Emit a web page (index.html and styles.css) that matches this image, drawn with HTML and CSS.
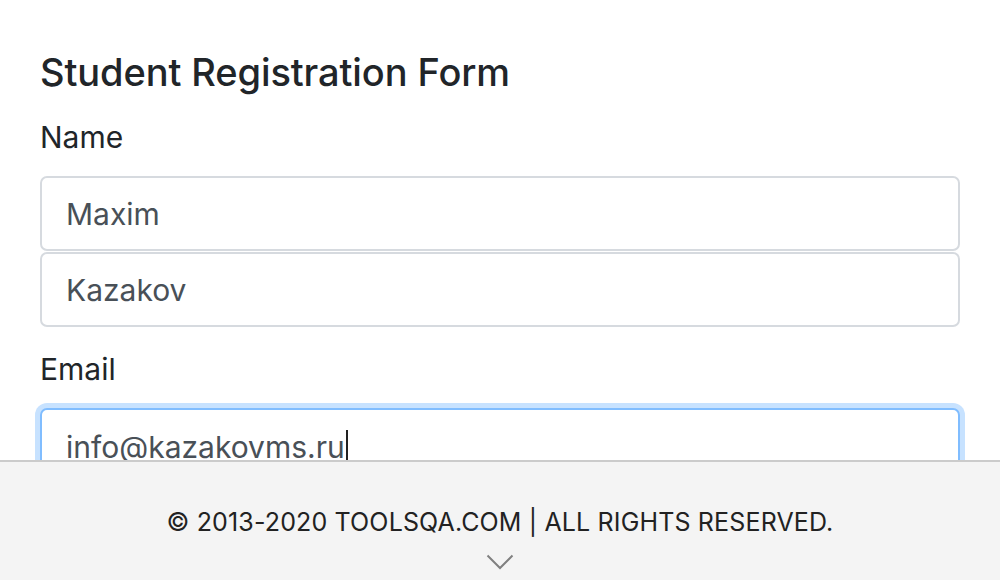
FILE: index.html
```html
<!DOCTYPE html>
<html lang="en">
<head>
<meta charset="utf-8">
<title>Student Registration Form</title>
<link rel="stylesheet" href="styles.css">
</head>
<body>
<main class="page">
  <h1 class="title">Student Registration Form</h1>
  <form class="form">
    <div class="group">
      <label class="label">Name</label>
      <div class="stack">
        <input class="field" type="text" value="Maxim">
        <input class="field" type="text" value="Kazakov">
      </div>
    </div>
    <div class="group">
      <label class="label">Email</label>
      <div class="field field-focus"><span>info@kazakovms.ru</span><span class="caret"></span></div>
    </div>
  </form>
</main>
<footer class="footer">
  <p class="copy">© 2013-2020 TOOLSQA.COM | ALL RIGHTS RESERVED.</p>
  <svg class="chev" width="28" height="16" viewBox="0 0 28 16"><path d="M1.5 1.5 L14 14 L26.5 1.5" fill="none" stroke="#808080" stroke-width="2"/></svg>
</footer>
</body>
</html>
```
FILE: styles.css
```css
html, body { margin: 0; padding: 0; background: #fff; }
body { font-family: Inter, "Noto Sans", sans-serif; color: #212529; overflow: hidden; height: 580px; }
.page { padding: 48px 40px 0 40px; width: 920px; }
.title { margin: 0; font-size: 38px; font-weight: 500; line-height: 48px; letter-spacing: -0.1px; }
.form { display: flex; flex-direction: column; gap: 24px; margin-top: 23px; }
.group { display: flex; flex-direction: column; }
.label { font-size: 30px; line-height: 36px; margin-bottom: 21px; }
.stack { display: flex; flex-direction: column; gap: 1px; }
.field {
  box-sizing: border-box; width: 920px; height: 75px; margin: 0;
  border: 2px solid #d6dadf; border-radius: 7px; background: #fff;
  padding: 0 24px; font-family: inherit; font-size: 30px; color: #495057;
  outline: none; display: flex; align-items: center;
}
.field-focus { border-color: #80bdff; box-shadow: 0 0 0 5px rgba(0,123,255,.22); margin-top: 0; padding-top: 2px; }
.caret { display: inline-block; width: 2px; height: 34px; background: #222; margin-left: 1px; }
.footer {
  position: fixed; left: 0; right: 0; bottom: 0; height: 118px;
  background: #f4f4f4; border-top: 2px solid #cbcbcb;
  display: flex; flex-direction: column; align-items: center;
}
.copy { margin: 45px 0 0; font-size: 25px; line-height: 30px; color: #222; letter-spacing: 0.15px; }
.chev { margin-top: 17px; }
```
